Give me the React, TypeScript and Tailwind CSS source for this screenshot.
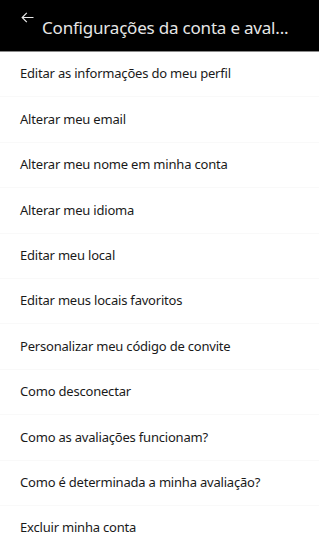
const items = [
  "Editar as informações do meu perfil",
  "Alterar meu email",
  "Alterar meu nome em minha conta",
  "Alterar meu idioma",
  "Editar meu local",
  "Editar meus locais favoritos",
  "Personalizar meu código de convite",
  "Como desconectar",
  "Como as avaliações funcionam?",
  "Como é determinada a minha avaliação?",
  "Excluir minha conta",
];

export default function App() {
  return (
    <div className="w-[319px] h-[547px] overflow-hidden bg-white" style={{ fontFamily: '"Noto Sans", sans-serif' }}>
      {/* Header */}
      <div className="h-[52px] bg-black flex items-start border-b border-[#8a8a8a]">
        <svg className="ml-[21px] mt-[12px] w-[13px] h-[11px] shrink-0" viewBox="0 0 13 11" fill="none">
          <path d="M12.5 5.5H1.2M5.8 0.8L1.2 5.5l4.6 4.7" stroke="#e8e8e8" strokeWidth="1.2" />
        </svg>
        <div className="ml-[8px] mt-[16px] text-[17px] leading-[24px] tracking-[-0.2px] text-[#e6e6e6] whitespace-nowrap">
          Configurações da conta e aval...
        </div>
      </div>

      {/* Settings list */}
      <div className="flex flex-col">
        {items.map((item) => (
          <div key={item} className="h-[45.4px] px-[20px] flex items-center border-b border-[#f9f9f9] text-[13px] tracking-[-0.2px] text-[#1a1a1a]">
            {item}
          </div>
        ))}
      </div>
    </div>
  );
}
